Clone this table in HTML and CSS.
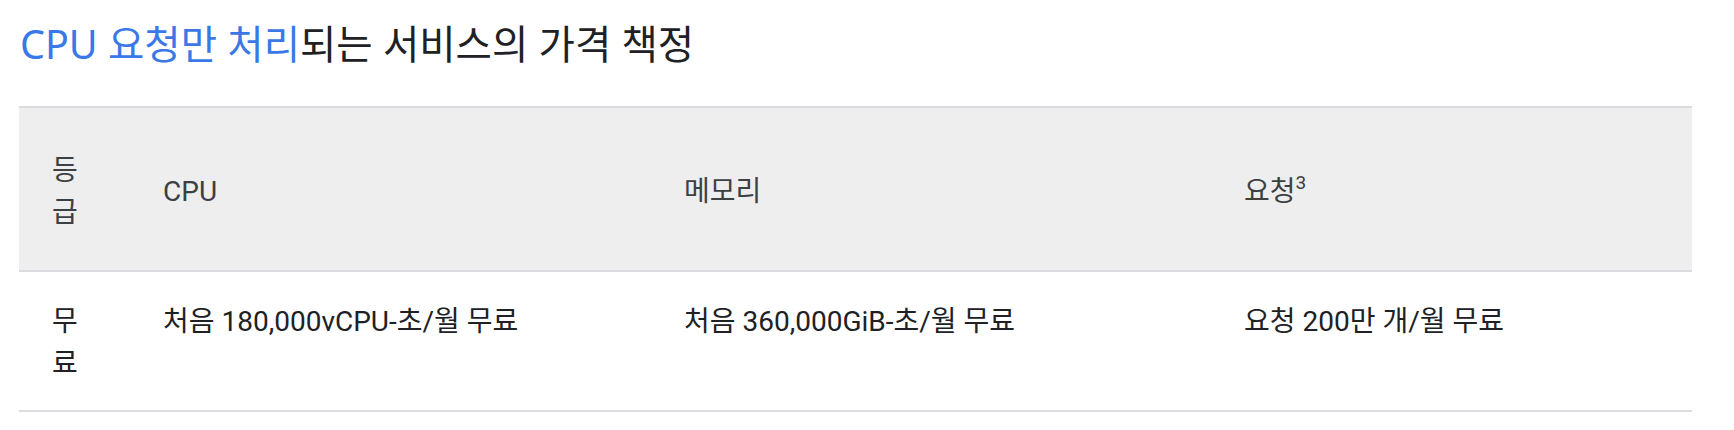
FILE: index.html
```html
<!DOCTYPE html>
<html lang="ko">
<head>
<meta charset="utf-8">
<link rel="stylesheet" href="styles.css">
</head>
<body>
<h2 class="title"><a class="title-link" href="#">CPU 요청만 처리</a>되는 서비스의 가격 책정</h2>
<table class="price-table">
  <colgroup>
    <col class="c-tier">
    <col class="c-cpu">
    <col class="c-mem">
    <col class="c-req">
  </colgroup>
  <thead>
    <tr>
      <th>등급</th>
      <th>CPU</th>
      <th>메모리</th>
      <th>요청<sup class="note">3</sup></th>
    </tr>
  </thead>
  <tbody>
    <tr>
      <td>무료</td>
      <td>처음 180,000vCPU-초/월 무료</td>
      <td>처음 360,000GiB-초/월 무료</td>
      <td>요청 200만 개/월 무료</td>
    </tr>
  </tbody>
</table>
</body>
</html>
```

FILE: styles.css
```css
html, body {
  margin: 0;
  padding: 0;
  background: #ffffff;
}

body {
  font-family: Roboto, "Noto Sans CJK KR", sans-serif;
  color: #202124;
}

.title {
  margin: 0;
  padding: 20px 0 0 20px;
  font-family: "Noto Sans", "Noto Sans CJK KR", sans-serif;
  font-weight: 400;
  font-size: 39.5px;
  line-height: 48px;
  color: #202124;
  height: 106px;
  box-sizing: border-box;
}

.title-link {
  color: #3b78e7;
  text-decoration: none;
}

.price-table {
  margin: 0 0 0 19px;
  width: 1673px;
  table-layout: fixed;
  border-collapse: collapse;
  font-size: 28px;
  line-height: 42px;
}

.c-tier { width: 111px; }
.c-cpu { width: 521px; }
.c-mem { width: 560px; }
.c-req { width: 481px; }

.price-table thead tr {
  background: #eeeeee;
  border-top: 2px solid #dadce0;
  border-bottom: 2px solid #dadce0;
}

.price-table th {
  height: 164px;
  padding: 6px 33px 0;
  text-align: left;
  font-weight: 400;
  vertical-align: middle;
  color: #3c4043;
  box-sizing: border-box;
}

.price-table tbody tr {
  border-bottom: 2px solid #dadce0;
}

.price-table td {
  padding: 29px 33px 25px;
  vertical-align: top;
  color: #202124;
}

.note {
  font-size: 19px;
  line-height: 0;
  vertical-align: 12px;
}
```
